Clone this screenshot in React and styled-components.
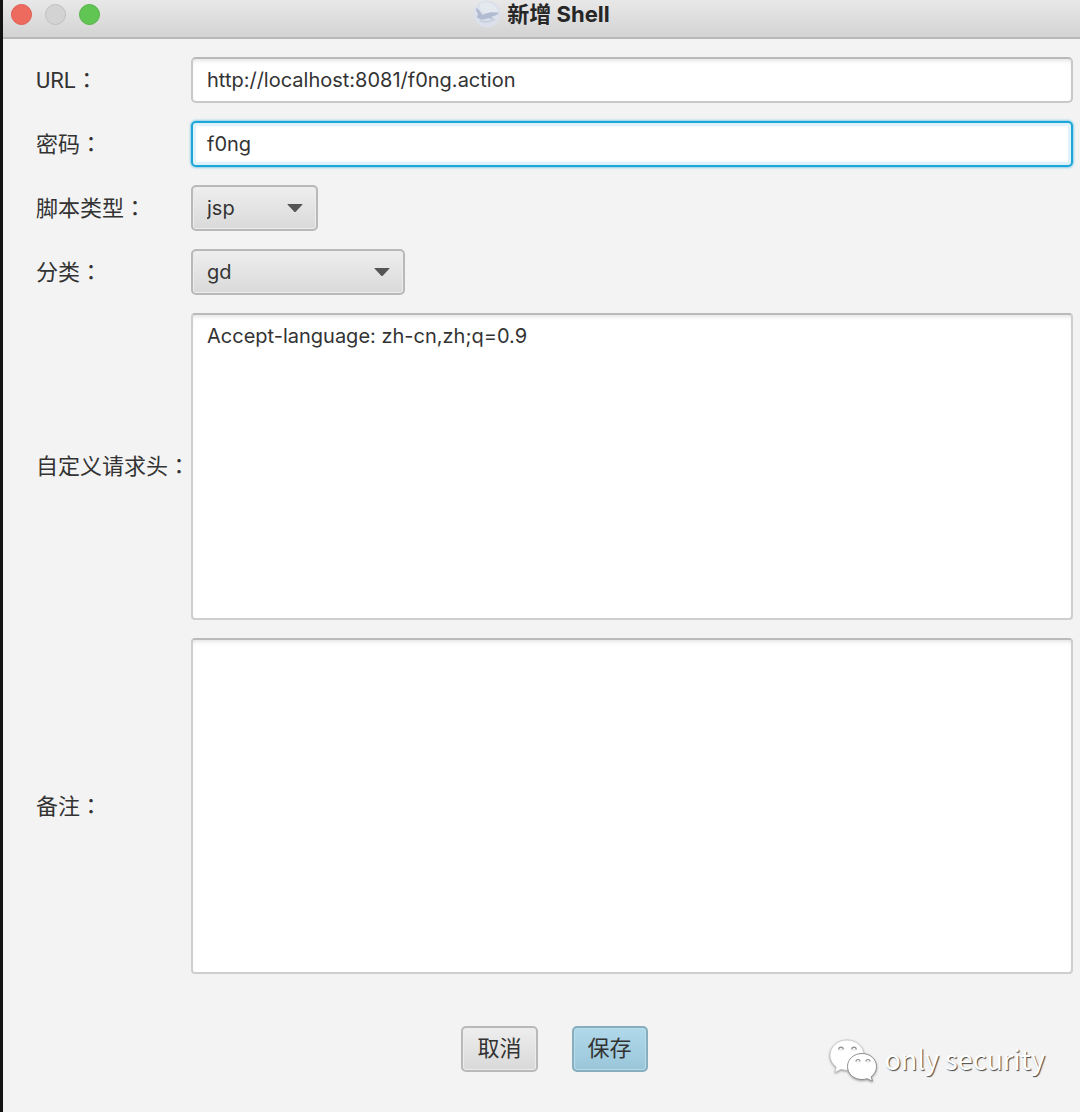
import styled, { createGlobalStyle } from "styled-components";

const App = () => {
  return (
    <>
      <GlobalStyle />
      <Window>
        <TitleBar>
          <Lights>
            <Light $color="#ed6a5e" $edge="#e0584c" aria-label="close" />
            <Light $color="#d3d3d3" $edge="#bfbfbf" aria-label="minimize" />
            <Light $color="#61c554" $edge="#52b344" aria-label="zoom" />
          </Lights>
          <Title>
            <WhaleIcon />
            新增 Shell
          </Title>
        </TitleBar>
        <Form onSubmit={(e) => e.preventDefault()}>
          <Fields>
            <FieldLabel id="url" text="URL" />
            <TextField id="url" defaultValue="http://localhost:8081/f0ng.action" />

            <FieldLabel id="password" text="密码" />
            <TextField id="password" defaultValue="f0ng" $focused />

            <FieldLabel id="type" text="脚本类型" />
            <ComboBox id="type" width={127} options={["jsp"]} />

            <FieldLabel id="category" text="分类" />
            <ComboBox id="category" width={214} options={["gd"]} />

            <FieldLabel id="headers" text="自定义请求头" />
            <TextArea
              id="headers"
              $height={307}
              defaultValue="Accept-language: zh-cn,zh;q=0.9"
            />

            <FieldLabel id="remark" text="备注" />
            <TextArea id="remark" $height={336} />
          </Fields>
          <Actions>
            <Button type="button">取消</Button>
            <Button type="submit" $primary>
              保存
            </Button>
          </Actions>
        </Form>
        <Watermark>
          <WechatIcon />
          only security
        </Watermark>
      </Window>
    </>
  );
};

export default App;

const FieldLabel = ({ id, text }) => (
  <Label htmlFor={id}>
    {text}
    <Colon>：</Colon>
  </Label>
);

const ComboBox = ({ id, width, options }) => (
  <SelectBox $width={width}>
    <Select id={id}>
      {options.map((option) => (
        <option key={option}>{option}</option>
      ))}
    </Select>
    <Arrow viewBox="0 0 16 8">
      <path d="M1 0h14q1 0 .3.8L9 7.5q-1 1-2 0L.7.8Q0 0 1 0z" fill="#555" />
    </Arrow>
  </SelectBox>
);

const WhaleIcon = () => (
  <svg width="28" height="28" viewBox="0 0 28 28" aria-hidden="true">
    <circle cx="14" cy="14" r="13.5" fill="#dbe0ea" />
    <path d="M7 4q7-4 14 1l4 6-8 3-9-3z" fill="#e4e8ef" />
    <path
      d="M3 8c3 1 4 3 5 5 1 2 2 2 4 1 4-2 9-2 14-1-2 2-5 3-8 4l4 4-6-3c-5 2-10 2-12-1l1-3c-1-2-2-3-2-6z"
      fill="#b0bad0"
    />
    <path d="M7 20c4 3 10 2 15-1" stroke="#c9d0de" strokeWidth="2" fill="none" />
  </svg>
);

const WechatIcon = () => (
  <Bubbles viewBox="0 0 50 44" aria-hidden="true">
    <g stroke="#bdbdbd" strokeWidth="0.7" fill="#fff" strokeLinejoin="round">
      <path d="M18 1C8.500 1 1 7.800 1 16.200c0 4.700 2.400 8.900 6.200 11.700L6 33.500l6-3.200c2 .6 4 .9 6 .9 9.400 0 17-6.700 17-15.100S27.400 1 18 1z" />
      <path
        d="M33 14.500c-8.200 0-14.500 5.700-14.500 13S24.800 40.500 33 40.500c1.800 0 3.500-.3 5.100-.8l5.400 2.500-1.300-4.500c3.300-2.400 5.300-6 5.300-10.200 0-7.300-6.300-13-14.500-13z"
        stroke="#8f8f8f"
        strokeWidth="1"
      />
    </g>
    <g fill="#f3f3f3">
      <circle cx="12" cy="10.500" r="2.300" />
      <circle cx="25" cy="10.500" r="2.300" />
      <circle cx="29" cy="22.500" r="2" />
      <circle cx="39" cy="22.500" r="2" />
    </g>
    <g fill="none" stroke="#8f8f8f" strokeWidth="1.200">
      <path d="M9.700 10.500a2.300 2.300 0 0 1 4.600 0M22.700 10.500a2.300 2.300 0 0 1 4.600 0" />
      <path d="M27 22.500a2 2 0 0 1 4 0M37 22.500a2 2 0 0 1 4 0" />
    </g>
  </Bubbles>
);

const GlobalStyle = createGlobalStyle`
  * {
    box-sizing: border-box;
  }

  body {
    margin: 0;
    background-color: #f3f3f3;
  }

  body, button {
    font-family: Roboto, "Noto Sans CJK SC", sans-serif;
    font-size: 22px;
    line-height: 28px;
    color: #333;
  }

  input, select, textarea {
    font-family: Inter, "Noto Sans CJK SC", sans-serif;
    font-size: 20px;
    line-height: 28px;
    color: #333;
  }
`;

const Window = styled.div`
  position: relative;
  min-height: 100vh;
  border-left: 3px solid #131316;
  background-color: #f3f3f3;
`;

const TitleBar = styled.header`
  display: grid;
  grid-template-columns: 1fr auto 1fr;
  align-items: center;
  height: 39px;
  padding: 0 8px 10px;
  background: linear-gradient(#e8e8e8, #d3d3d3);
  border-bottom: 2px solid #b9b9b9;
`;

const Lights = styled.div`
  display: flex;
  gap: 13px;
`;

const Light = styled.button`
  width: 21px;
  height: 21px;
  padding: 0;
  border: 1px solid ${(props) => props.$edge};
  border-radius: 50%;
  background-color: ${(props) => props.$color};
`;

const Title = styled.h1`
  display: flex;
  align-items: center;
  gap: 6px;
  margin: 0;
  font-family: Inter, "Noto Sans CJK SC", sans-serif;
  font-size: 22px;
  font-weight: 700;
  color: #262626;
`;

const Form = styled.form`
  padding: 18px 7px 40px 33px;
`;

const Fields = styled.div`
  display: grid;
  grid-template-columns: 155px 1fr;
  align-items: center;
  row-gap: 18px;
`;

const Label = styled.label`
  padding-bottom: 2px;
  white-space: nowrap;
`;

/* the TC face keeps the full-width colon in the middle of its box */
const Colon = styled.span`
  font-family: "Noto Sans CJK TC", sans-serif;
`;

const TextField = styled.input`
  width: 100%;
  height: 46px;
  padding: 0 14px;
  border: 2px solid ${(props) => (props.$focused ? "#1fa6d8" : "#c8c8c8")};
  border-top-color: ${(props) => (props.$focused ? "#1fa6d8" : "#bababa")};
  border-radius: 5px;
  background-color: #fff;
  box-shadow: ${(props) =>
    props.$focused
      ? "inset 0 0 0 3px #dff1f9, 0 0 2px 1px #8fd0e9"
      : "inset 0 4px 4px -2px #e6e6e6"};
  outline: none;
`;

const TextArea = styled.textarea`
  display: block;
  width: 100%;
  height: ${(props) => props.$height}px;
  padding: 7px 14px;
  border: 2px solid #cecece;
  border-top-color: #bababa;
  border-radius: 4px;
  background-color: #fff;
  box-shadow: inset 0 4px 4px -2px #e6e6e6;
  outline: none;
  resize: none;
`;

const SelectBox = styled.div`
  position: relative;
  width: ${(props) => props.$width}px;
`;

const Select = styled.select`
  display: block;
  appearance: none;
  width: 100%;
  height: 46px;
  padding: 0 14px;
  border: 2px solid #b9b9b9;
  border-radius: 5px;
  background: linear-gradient(#eeeeee, #d9d9d9);
  box-shadow: inset 0 0 0 1px #ececec;
`;

const Arrow = styled.svg`
  position: absolute;
  top: 19px;
  right: 15px;
  width: 16px;
  height: 8px;
  pointer-events: none;
`;

const Actions = styled.div`
  display: flex;
  justify-content: center;
  gap: 34px;
  margin-top: 52px;
`;

const Button = styled.button`
  height: 46px;
  padding: 0 14px;
  border: 2px solid ${(props) => (props.$primary ? "#86aebf" : "#b9b9b9")};
  border-radius: 5px;
  background: ${(props) =>
    props.$primary
      ? "linear-gradient(#b0d9ea, #9bc5d9)"
      : "linear-gradient(#eeeeee, #d9d9d9)"};
  box-shadow: inset 0 0 0 1px ${(props) => (props.$primary ? "#b7dcea" : "#ececec")};
`;

const Watermark = styled.div`
  position: absolute;
  right: 35px;
  bottom: 29px;
  display: flex;
  align-items: flex-start;
  gap: 5px;
  font-family: "Noto Sans CJK SC", sans-serif;
  font-size: 27px;
  line-height: 40px;
  color: #fff;
  text-shadow: 1px 1px 1px #444;
`;

const Bubbles = styled.svg`
  width: 50px;
  height: 44px;
  filter: drop-shadow(0 1px 1px #999);
`;
